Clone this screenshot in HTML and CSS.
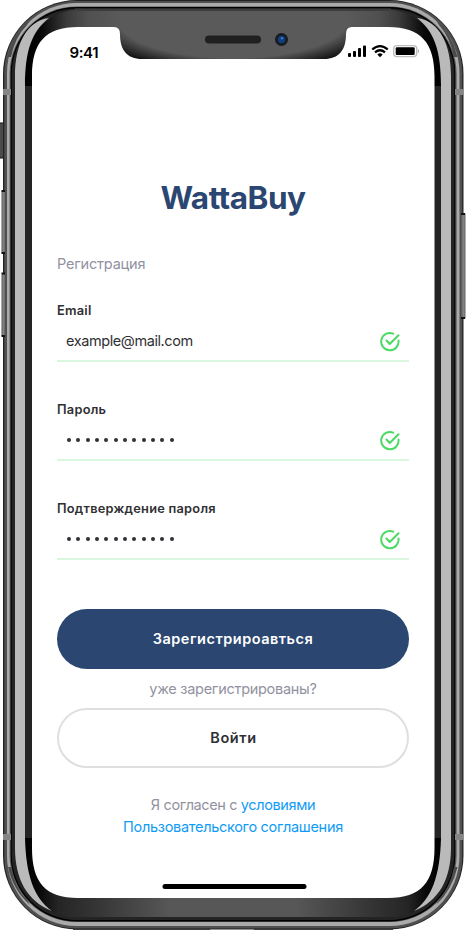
FILE: index.html
```html
<!DOCTYPE html>
<html lang="ru">
<head>
<meta charset="utf-8">
<title>WattaBuy</title>
<link rel="stylesheet" href="styles.css">
</head>
<body>
<main class="phone">
  <svg class="frame" viewBox="0 0 466 930" aria-hidden="true">
    <defs>
      <linearGradient id="bezel" x1="25" x2="441" y1="0" y2="0" gradientUnits="userSpaceOnUse">
        <stop offset="0" stop-color="#000"/><stop offset=".04" stop-color="#080808"/><stop offset=".1" stop-color="#3a3a3a"/><stop offset=".15" stop-color="#505050"/><stop offset=".23" stop-color="#5a5a5a"/>
        <stop offset=".77" stop-color="#5a5a5a"/><stop offset=".85" stop-color="#505050"/><stop offset=".9" stop-color="#3a3a3a"/><stop offset=".96" stop-color="#080808"/><stop offset="1" stop-color="#000"/>
      </linearGradient>
      <linearGradient id="bottom" x1="25" x2="441" y1="0" y2="0" gradientUnits="userSpaceOnUse">
        <stop offset="0" stop-color="#000"/><stop offset=".04" stop-color="#0c0c0c"/><stop offset=".08" stop-color="#252525"/><stop offset=".16" stop-color="#333"/><stop offset=".35" stop-color="#575757"/>
        <stop offset=".65" stop-color="#575757"/><stop offset=".84" stop-color="#333"/><stop offset=".92" stop-color="#252525"/><stop offset=".96" stop-color="#0c0c0c"/><stop offset="1" stop-color="#000"/>
      </linearGradient>
      <radialGradient id="shade" cx="0" cy="0" r="1" gradientUnits="userSpaceOnUse" gradientTransform="translate(233 20) scale(150 50)">
        <stop offset=".76" stop-opacity="0"/><stop offset="1" stop-opacity=".8"/>
      </radialGradient>
      <linearGradient id="button" x1="0" x2="1" y1="0" y2="0">
        <stop offset="0" stop-color="#555"/><stop offset=".5" stop-color="#858585"/><stop offset="1" stop-color="#666"/>
      </linearGradient>
    </defs>
    <rect x="-4" y="123" width="9" height="35" rx="1.5" fill="#4b4b4b" stroke="#111"/>
    <rect x="3" y="0" width="460.500" height="929.500" rx="74" fill="#222"/>
    <rect x="4.300" y="1" width="458" height="927.500" rx="72" fill="#505050"/>
    <rect x="7" y="3" width="452.500" height="923" rx="70" fill="#aaa"/>
    <rect x="9.600" y="6.500" width="447" height="915.500" rx="67" fill="#555"/>
    <rect x="10.700" y="7" width="444.600" height="914.500" rx="66" fill="#000"/>
    <rect x="11.700" y="8.500" width="442.600" height="911.500" rx="65" fill="#242424"/>
    <path d="M25 86V80Q25 10 85 9H381Q441 10 441 80V86Z" fill="url(#bezel)"/>
    <path d="M75 8.500H391V11H75Z" fill="#3c3c3c"/>
    <path d="M25 838V850Q28 917 76 917H390Q438 917 441 850V838Z" fill="url(#bottom)"/>
    <path d="M15 848V76C15 45 26 21 49 18C32 31 25 50 25 86V838C26 876 34 898 52 911C27 901 15 879 15 848Z" fill="#bababa"/>
    <path d="M451 848V76C451 45 440 21 417 18C434 31 441 50 441 86V838C440 876 432 898 414 911C439 901 451 879 451 848Z" fill="#bababa"/>
    <path d="M8 57Q13 34 30 20L27 25Q15 37 11 57Z M457.500 57Q452 34 436 20L439 25Q450 37 454 57Z M8 867Q13 890 30 905L27 900Q15 888 11 867Z M457.500 867Q452 890 436 905L439 900Q450 888 454 867Z" fill="#4b4b4b"/>
    <path d="M3 89H11V95H3ZM455 89H463V95H455ZM3 834H11V840H3ZM455 834H463V840H455Z" fill="#858585"/>
    <rect x="1.500" y="191" width="3.500" height="62" rx="1" fill="url(#button)"/>
    <rect x="1.500" y="274" width="3.500" height="62" rx="1" fill="url(#button)"/>
    <path d="M1.500 191h3.500M1.500 253h3.500M1.500 273.500h3.500M1.500 336h3.500" stroke="#111" stroke-width="2"/>
    <rect x="461" y="213" width="4.500" height="106" rx="1" fill="url(#button)"/>
    <path d="M461 214h4M461 318h4" stroke="#111" stroke-width="2"/>
    <path d="M119 27H347V60H119Z" fill="url(#shade)"/>
    <path d="M32 76C32 43 45 27 78 27H114Q120 27 120 34C120 50 127 59 142 59H324C339 59 346 50 346 34Q346 27 352 27H388C421 27 434.500 43 434.500 76V848C434.500 882 421 898 388 898H78C45 898 32 882 32 848Z" fill="#fff"/>
    <rect x="205" y="35.500" width="56" height="8" rx="4" fill="#202020"/>
    <circle cx="281.500" cy="39.500" r="6.500" fill="#171b20"/>
    <circle cx="281.500" cy="39.500" r="3.800" fill="#123d79"/>
    <circle cx="282" cy="38.300" r="1.200" fill="#3579cd"/>
    <path d="M73 929.400H210M254 929.400H393" stroke="#333" stroke-width="1"/>
  </svg>

  <div class="screen">
    <header class="status">
      <time class="clock">9:41</time>
      <svg class="signals" viewBox="0 0 74 16" aria-hidden="true">
        <g fill="#000"><rect x="1" y="10" width="3" height="4" rx="1"/><rect x="6" y="8" width="3" height="6" rx="1"/><rect x="11" y="5" width="3" height="9" rx="1"/><rect x="16" y="2.500" width="3" height="11.500" rx="1"/></g>
        <g fill="none" stroke="#000" stroke-width="2.300"><path d="M25.300 6.500Q33 -.3 40.700 6.500"/><path d="M28 9.400Q33 5.200 38 9.400"/></g>
        <path d="M30.300 11.500Q33 9.200 35.700 11.500L33 14.200Z"/>
        <rect x="46.700" y="2.600" width="23" height="11" rx="3" fill="none" stroke="#bdbdbd" stroke-width="1.400"/>
        <rect x="48.700" y="4.300" width="19" height="7.700" rx="1.200"/>
        <path d="M71 6Q73.200 8 71 10.200Z" fill="#aaa"/>
      </svg>
    </header>

    <h1 class="brand">WattaBuy</h1>
    <form class="form">
      <h2 class="subtitle">Регистрация</h2>
      <div class="field">
        <span class="label">Email</span>
        <div class="entry"><span class="email">example@mail.com</span>
          <svg class="check" viewBox="0 0 22 22"><path d="M14.200 2.600A8.700 8.700 0 1 0 19.500 9.500M7.500 9.500L10.700 13L19.500 4.200"/></svg>
        </div>
      </div>
      <div class="field">
        <span class="label">Пароль</span>
        <div class="entry"><span class="dots"><i></i><i></i><i></i><i></i><i></i><i></i><i></i><i></i><i></i><i></i><i></i><i></i></span>
          <svg class="check" viewBox="0 0 22 22"><path d="M14.200 2.600A8.700 8.700 0 1 0 19.500 9.500M7.500 9.500L10.700 13L19.500 4.200"/></svg>
        </div>
      </div>
      <div class="field">
        <span class="label">Подтверждение пароля</span>
        <div class="entry"><span class="dots"><i></i><i></i><i></i><i></i><i></i><i></i><i></i><i></i><i></i><i></i><i></i><i></i></span>
          <svg class="check" viewBox="0 0 22 22"><path d="M14.200 2.600A8.700 8.700 0 1 0 19.500 9.500M7.500 9.500L10.700 13L19.500 4.200"/></svg>
        </div>
      </div>
      <button class="btn primary" type="button">Зарегистрироавться</button>
      <p class="question">уже зарегистрированы?</p>
      <button class="btn secondary" type="button">Войти</button>
      <p class="terms"><span class="consent">Я согласен с <a>условиями</a></span><br><a>Пользовательского соглашения</a></p>
    </form>
    <div class="home"></div>
  </div>
</main>
</body>
</html>
```
FILE: styles.css
```css
* { box-sizing: border-box; }
body { margin: 0; background: #fff; font-family: Inter, "Liberation Sans", sans-serif; color: #2f3033; }
.phone { position: relative; width: 466px; height: 930px; overflow: hidden; }
.frame { position: absolute; inset: 0; width: 466px; height: 930px; }
.screen { position: relative; height: 930px; padding: 43px 57px 0; display: flex; flex-direction: column; }
.status { display: flex; justify-content: space-between; height: 20px; margin: 0 -12px 0 12.500px; }
.clock { font-size: 15px; line-height: 20px; font-weight: 600; letter-spacing: -.4px; color: #000; }
.signals { width: 74px; height: 16px; }
.brand { margin: 114px 0 0; height: 41px; line-height: 41px; text-align: center; font-size: 31.500px; font-weight: 650; letter-spacing: -.5px; color: #2a4671; }
.form { display: flex; flex-direction: column; padding-top: 36px; }
.subtitle { margin: 0 0 26px; font-size: 14.500px; line-height: 20px; font-weight: 400; letter-spacing: -.2px; color: #9292a1; }
.field { height: 62px; width: 351.500px; margin-bottom: 37px; border-bottom: 2px solid #daf8df; }
.label { display: block; height: 21px; padding-top: 1px; font-size: 12.800px; line-height: 20px; font-weight: 600; letter-spacing: .25px; }
.entry { height: 22px; display: flex; align-items: center; justify-content: space-between; padding: 0 7.500px 0 9px; margin-top: 10px; }
.email { font-size: 14.500px; line-height: 20px; letter-spacing: -.42px; margin-top: -3px; }
.check { width: 22px; height: 22px; fill: none; stroke: #4cd964; stroke-width: 2; stroke-linecap: round; stroke-linejoin: round; }
.dots { display: flex; gap: 5.350px; padding-left: 1px; margin-top: -2px; }
.dots i { width: 4px; height: 4px; border-radius: 50%; background: #2f3033; }
.btn { width: 352px; height: 60px; border-radius: 30px; padding: 0; font: 600 14.500px/20px Inter, "Liberation Sans", sans-serif; letter-spacing: .5px; }
.primary { margin-top: 12px; border: 0; background: #2a4671; color: #fff; }
.question { margin: 10px 0 9px; text-align: center; font-size: 14.500px; line-height: 20px; letter-spacing: -.28px; color: #9292a1; }
.secondary { background: #fff; border: 2px solid #dfdfdf; color: #2f3033; padding-left: 1px; letter-spacing: .6px; }
.terms { margin: 26px 0 0; text-align: center; font-size: 14.500px; line-height: 22px; letter-spacing: -.3px; color: #9292a1; }
.consent { letter-spacing: -.38px; }
.terms a { color: #109cf5; }
.home { width: 144px; height: 5px; margin: 46px auto 0; transform: translateX(1.500px); background: #000; border-radius: 3px; }
```
